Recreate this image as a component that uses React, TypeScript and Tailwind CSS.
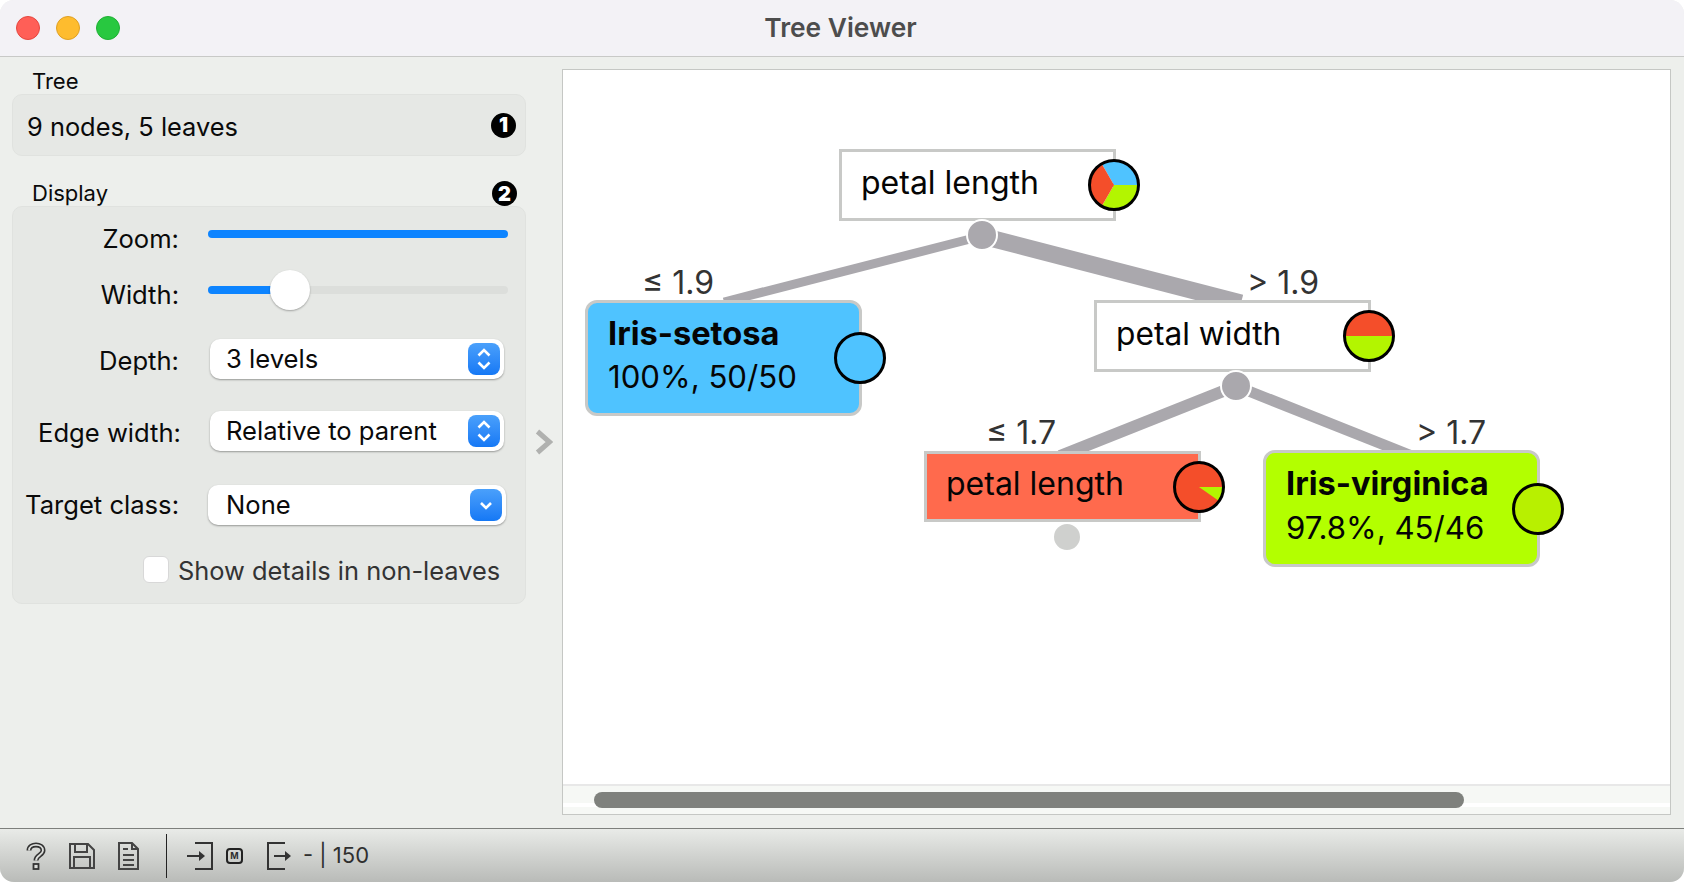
import React from "react";

function Pie({ className, children }: { className: string; children: React.ReactNode }) {
  return (
    <svg viewBox="0 0 56 56" className={`absolute w-[56px] h-[56px] ${className}`}>
      {children}
      <circle cx="28" cy="28" r="24.5" fill="none" stroke="#000" strokeWidth="3" />
    </svg>
  );
}

function Label({ className, children }: { className: string; children: React.ReactNode }) {
  return (
    <div className={`absolute text-[32px] leading-[34px] text-[#333] whitespace-nowrap ${className}`}>
      {children}
    </div>
  );
}

function Stepper({ single }: { single?: boolean }) {
  return (
    <div className="w-[32px] h-[32px] rounded-[8px] bg-gradient-to-b from-[#4aa0fb] to-[#1478f5] flex items-center justify-center">
      {single ? (
        <svg viewBox="0 0 32 32" className="w-[32px] h-[32px]">
          <path d="M11 14l5 5 5-5" fill="none" stroke="#fff" strokeWidth="2.6" />
        </svg>
      ) : (
        <svg viewBox="0 0 32 32" className="w-[32px] h-[32px]">
          <path d="M10.5 12.5L16 7l5.500 5.500M10.500 19.500L16 25l5.500-5.500" fill="none" stroke="#fff" strokeWidth="2.600" />
        </svg>
      )}
    </div>
  );
}

function Combo({ text, single, className }: { text: string; single?: boolean; className: string }) {
  return (
    <div className={`h-[40px] bg-white rounded-[10px] shadow-[0_1px_2px_rgba(0,0,0,0.35)] flex items-center justify-between pr-[4px] text-[#0a0a0a] ${className}`}>
      <span>{text}</span>
      <Stepper single={single} />
    </div>
  );
}

function Badge({ n }: { n: string }) {
  return (
    <div className="w-[25px] h-[25px] rounded-full bg-black text-white text-[20px] font-black flex items-center justify-center">
      {n}
    </div>
  );
}

function Tree() {
  return (
    <div className="relative flex-1 bg-white overflow-hidden">
      <svg viewBox="563 70 1107 714" className="absolute inset-0 w-full h-full">
        <g stroke="#aaa8ad" fill="none">
          <line x1="982" y1="236" x2="724" y2="302" strokeWidth="9" />
          <line x1="982" y1="236" x2="1241" y2="303" strokeWidth="17" />
          <line x1="1236" y1="386" x2="1060" y2="456" strokeWidth="12" />
          <line x1="1236" y1="386" x2="1412" y2="456" strokeWidth="11" />
        </g>
      </svg>

      <Label className="left-[79px] top-[196px]">≤ 1.9</Label>
      <Label className="left-[684px] top-[196px]">&gt; 1.9</Label>
      <Label className="left-[423px] top-[346px]">≤ 1.7</Label>
      <Label className="left-[853px] top-[346px]">&gt; 1.7</Label>

      {/* root */}
      <div className="absolute left-[276px] top-[79px] w-[277px] h-[72px] bg-white border-[3px] border-[#c8c9c7] pl-[19px] flex items-center text-[32px] text-[#050505]">
        <span className="-mt-[5px]">petal length</span>
      </div>
      <Pie className="left-[523px] top-[87px]">
        <path d="M28 28L52 28A24 24 0 0 0 16 7.200Z" fill="#4fc3ff" />
        <path d="M28 28L52 28A24 24 0 0 1 16 48.800Z" fill="#b3f500" />
        <path d="M28 28L16 48.800A24 24 0 0 1 16 7.200Z" fill="#f44e2a" />
      </Pie>
      <div className="absolute left-[403px] top-[149px] w-[32px] h-[32px] rounded-full bg-[#aaa8ad] border-[2px] border-white" />

      {/* petal width */}
      <div className="absolute left-[531px] top-[230px] w-[277px] h-[72px] bg-white border-[3px] border-[#c8c9c7] pl-[19px] flex items-center text-[31.700px] text-[#050505]">
        <span className="-mt-[5px]">petal width</span>
      </div>
      <Pie className="left-[778px] top-[238px]">
        <path d="M4 28A24 24 0 0 1 52 28Z" fill="#f44e2a" />
        <path d="M4 28A24 24 0 0 0 52 28Z" fill="#b3f500" />
      </Pie>
      <div className="absolute left-[657px] top-[300px] w-[32px] h-[32px] rounded-full bg-[#aaa8ad] border-[2px] border-white" />

      {/* setosa */}
      <div className="absolute left-[22px] top-[230px] w-[277px] h-[116px] bg-[#4fc3ff] border-[3px] border-[#c8c9c7] rounded-[12px] pl-[20px] pt-[8px] text-[31.200px] leading-[44px] text-[#050505]">
        <div className="font-bold text-[32.600px]">Iris-setosa</div>
        <div>100%, 50/50</div>
      </div>
      <Pie className="left-[269px] top-[260px]">
        <circle cx="28" cy="28" r="24" fill="#4fc3ff" />
      </Pie>

      {/* red */}
      <div className="absolute left-[361px] top-[381px] w-[277px] h-[71px] bg-[#ff6a4d] border-[3px] border-[#c8c9c7] pl-[19px] flex items-center text-[32px] text-[#050505]">
        <span className="-mt-[5px]">petal length</span>
      </div>
      <Pie className="left-[608px] top-[389px]">
        <circle cx="28" cy="28" r="24" fill="#f44e2a" />
        <path d="M28 28L52 28A24 24 0 0 1 47.700 41.800Z" fill="#b3f500" />
      </Pie>
      <div className="absolute left-[489px] top-[452px] w-[30px] h-[30px] rounded-full bg-[#cfd0ce] border-[2px] border-white" />

      {/* virginica */}
      <div className="absolute left-[700px] top-[380px] w-[277px] h-[117px] bg-[#b3ff00] border-[3px] border-[#c8c9c7] rounded-[12px] pl-[20px] pt-[8px] text-[31.200px] leading-[45px] text-[#050505]">
        <div className="font-bold whitespace-nowrap text-[32.600px]">Iris-virginica</div>
        <div>97.8%, 45/46</div>
      </div>
      <Pie className="left-[947px] top-[411px]">
        <circle cx="28" cy="28" r="24" fill="#b8f000" />
      </Pie>
    </div>
  );
}

function Sidebar() {
  return (
    <div className="w-[562px] shrink-0 pl-[12px] relative">
      <div className="pl-[20px] pt-[12px] h-[37px] text-[22px] leading-[24px] text-[#0a0a0a]">Tree</div>
      <div className="w-[514px] h-[62px] rounded-[10px] bg-[#e6e8e5] border border-[#e0e2df] flex items-center justify-between pl-[14px] pr-[9px] text-[25.400px] text-[#0a0a0a]">
        <span className="pt-[5px]">9 nodes, 5 leaves</span>
        <Badge n="1" />
      </div>
      <div className="w-[514px] flex items-end justify-between pl-[20px] pr-[9px] h-[50px] text-[22px] leading-[24px] text-[#0a0a0a]">
        <span className="-translate-y-[1px]">Display</span>
        <Badge n="2" />
      </div>
      <div className="w-[514px] h-[398px] rounded-[10px] bg-[#e6e8e5] border border-[#e0e2df] pt-[17px] text-[25.600px] leading-[30px] text-[#0a0a0a]">
        <div className="flex items-start h-[50px]">
          <div className="w-[166px] text-right">Zoom:</div>
          <div className="ml-[29px] mt-[6px] w-[300px] h-[8px] rounded-full bg-[#0d84ff]" />
        </div>
        <div className="flex items-center h-[32px]">
          <div className="w-[166px] text-right pt-[10px]">Width:</div>
          <div className="relative ml-[29px] w-[300px] h-[8px] rounded-full bg-[#dcdedb]">
            <div className="w-[70px] h-[8px] rounded-full bg-[#0d84ff]" />
            <div className="absolute left-[62px] -top-[16px] w-[40px] h-[40px] rounded-full bg-white shadow-[0_1px_2px_rgba(0,0,0,0.3)]" />
          </div>
        </div>
        <div className="flex items-center mt-[33px] h-[40px]">
          <div className="w-[166px] text-right pt-[4px]">Depth:</div>
          <Combo text="3 levels" className="ml-[31px] w-[294px] pl-[16px]" />
        </div>
        <div className="flex items-center mt-[32px] h-[40px]">
          <div className="w-[168px] text-right pt-[4px]">Edge width:</div>
          <Combo text="Relative to parent" className="ml-[29px] w-[294px] pl-[16px]" />
        </div>
        <div className="flex items-center mt-[34px] h-[40px]">
          <div className="w-[166px] text-right">Target class:</div>
          <Combo text="None" single className="ml-[29px] w-[298px] pl-[18px]" />
        </div>
        <div className="flex items-center mt-[31px] h-[27px] pl-[130px] text-[25.400px] text-[#333]">
          <div className="w-[26px] h-[27px] rounded-[6px] bg-white border border-[#d8d8d8]" />
          <span className="ml-[9px] pt-[3px] whitespace-nowrap">Show details in non-leaves</span>
        </div>
      </div>
      <svg viewBox="0 0 18 26" className="absolute left-[535px] top-[372px] w-[18px] h-[26px]">
        <path d="M2.500 2.500L14.500 13L2.500 23.500" fill="none" stroke="#b0b1af" strokeWidth="5" />
      </svg>
    </div>
  );
}

function StatusBar() {
  return (
    <div className="h-[54px] shrink-0 border-t border-[#7d7f7c] bg-gradient-to-b from-[#e9ebe8] to-[#b9bbb8] flex items-center pl-[26px] text-[#2f2f2f]">
      <svg viewBox="0 0 20 28" className="w-[20px] h-[28px]">
        <path d="M3 8.500C3 1 17 1 17 8.500C17 13 10 13 10 18.500" fill="none" stroke="#333" strokeWidth="5" />
        <path d="M3 8.500C3 1 17 1 17 8.500C17 13 10 13 10 18.500" fill="none" stroke="#dcdedb" strokeWidth="1.800" />
        <rect x="7.500" y="22" width="5" height="5" fill="#dcdedb" stroke="#333" strokeWidth="1.800" />
      </svg>
      <svg viewBox="0 0 26 26" className="ml-[23px] w-[26px] h-[26px]">
        <path d="M1 1H19L25 7V25H1Z" fill="none" stroke="#444" strokeWidth="2" />
        <path d="M6 1V9H18V1M5 25V14H21V25" fill="none" stroke="#444" strokeWidth="2" />
      </svg>
      <svg viewBox="0 0 21 28" className="ml-[23px] w-[21px] h-[28px]">
        <path d="M1 1H14L20 7V27H1Z" fill="none" stroke="#444" strokeWidth="2" />
        <path d="M14 1V7H20M5 7H10M5 13H16M5 18H16M5 23H16" fill="none" stroke="#444" strokeWidth="2" />
      </svg>
      <div className="ml-[27px] w-[1px] h-[44px] bg-[#222]" />
      <svg viewBox="0 0 26 28" className="ml-[20px] w-[26px] h-[28px]">
        <path d="M8 1H25V27H8M0 14H15" fill="none" stroke="#333" strokeWidth="2" />
        <path d="M12 9L18 14L12 19Z" fill="#333" />
      </svg>
      <div className="ml-[13px] w-[17px] h-[16px] rounded-[4px] border-[2px] border-[#222] text-[9px] font-bold leading-[12px] text-center">
        M
      </div>
      <svg viewBox="0 0 25 28" className="ml-[24px] w-[25px] h-[28px]">
        <path d="M18 1H1V27H18M7 14H22" fill="none" stroke="#333" strokeWidth="2" />
        <path d="M18 9L24 14L18 19Z" fill="#333" />
      </svg>
      <span className="ml-[11px] text-[22px] whitespace-nowrap">- | 150</span>
    </div>
  );
}

export default function App() {
  return (
    <div className="w-[1684px] h-[882px] bg-white overflow-hidden" style={{ fontFamily: "Inter, sans-serif" }}>
      <div className="w-full h-full rounded-[14px] overflow-hidden flex flex-col bg-[#edefec]">
        <div className="h-[57px] shrink-0 bg-[#f3f2f6] border-b border-[#c8c9c7] flex items-center relative">
          <div className="flex gap-[16px] pl-[16px]">
            <div className="w-[24px] h-[24px] rounded-full bg-[#ff5f57] border border-[#e5473f]" />
            <div className="w-[24px] h-[24px] rounded-full bg-[#febc2e] border border-[#dfa023]" />
            <div className="w-[24px] h-[24px] rounded-full bg-[#28c840] border border-[#1fb034]" />
          </div>
          <div className="flex-1 text-center text-[26.300px] font-semibold text-[#4d4d4d] pr-[123px] -mt-[1px]">Tree Viewer</div>
        </div>
        <div className="flex-1 flex min-h-0">
          <Sidebar />
          <div className="w-[1109px] h-[746px] mt-[12px] border border-[#c5c7c4] flex flex-col">
            <Tree />
            <div className="relative h-[30px] shrink-0 bg-[#f6f8f5] border-t-2 border-[#e8e8e8] pl-[31px] pt-[6px]">
              <div className="absolute left-0 right-0 top-[17px] h-[4px] bg-white" />
              <div className="relative w-[870px] h-[16px] rounded-full bg-[#7f817d]" />
            </div>
          </div>
        </div>
        <StatusBar />
      </div>
    </div>
  );
}
